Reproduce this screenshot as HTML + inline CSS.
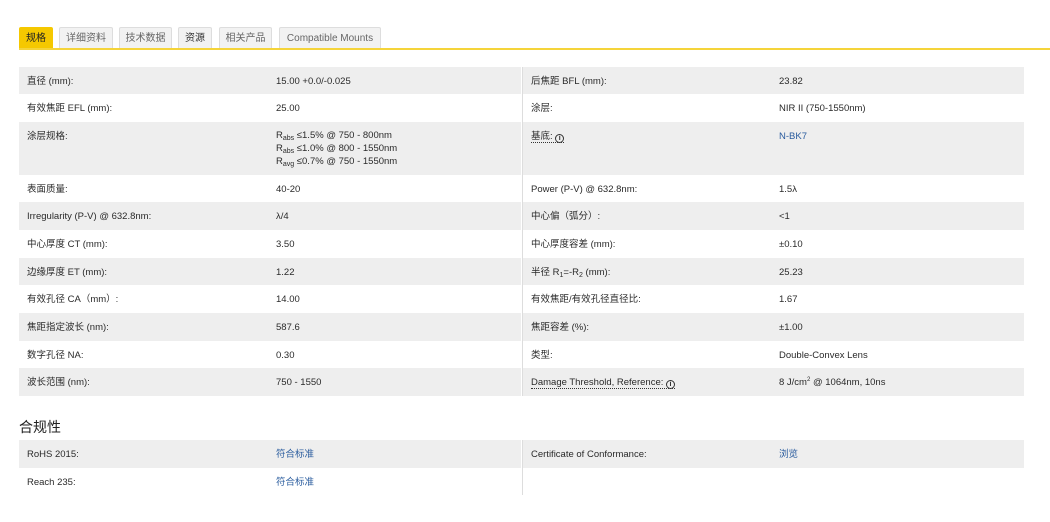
<!DOCTYPE html>
<html><head><meta charset="utf-8"><style>
*{margin:0;padding:0;box-sizing:border-box}
body{width:1050px;height:522px;background:#fff;font-family:"Liberation Sans","Noto Sans CJK SC",sans-serif;font-size:9.5px;color:#2a2a2a;position:relative;overflow:hidden}
.tab{position:absolute;top:27px;height:22px;line-height:22px;text-align:center;background:#f2f2f2;border:1px solid #ddd;border-bottom:none;color:#666;font-size:10px;border-radius:2px 2px 0 0}
.tab.a{background:#f5c800;border-color:#f5c800;color:#222}
.line{position:absolute;left:19px;right:0;top:48px;height:2px;background:#f5d43a}
.r{position:absolute;left:19px;width:1005px}
.r.s .c{background:#eeeeee}
.c{position:absolute;top:0;bottom:0}
.c1{left:0;width:502px}.c2{left:504px;width:501px}
.t{position:absolute;top:8px;white-space:nowrap;line-height:13px}
.l1{left:8px}.v1{left:257px}.l2{left:8px}.v2{left:256px}
a{color:#2a5c9e;text-decoration:none}
.sep{position:absolute;left:522px;width:1px;background:#ddd}
sub{font-size:7px;vertical-align:-2px;line-height:0}
sup{line-height:0}
.u{border-bottom:1px dotted #333}
.i{display:inline-block;width:9px;height:9px;border:1.3px solid #333;border-radius:50%;font-size:7px;line-height:7px;text-align:center;font-weight:bold;vertical-align:-1px}
h2{position:absolute;left:19px;top:417px;font-size:14px;font-weight:normal;color:#222}
</style></head><body>
<div class="tab a" style="left:19px;width:34px">规格</div>
<div class="tab" style="left:59px;width:54px">详细资料</div>
<div class="tab" style="left:119px;width:53px">技术数据</div>
<div class="tab" style="left:178px;width:34px;color:#333">资源</div>
<div class="tab" style="left:219px;width:53px">相关产品</div>
<div class="tab" style="left:279px;width:102px">Compatible Mounts</div>
<div class="line"></div>

<div class="r s" style="top:67px;height:27px"><div class="c c1"><span class="t l1">直径 (mm):</span><span class="t v1">15.00 +0.0/-0.025</span></div><div class="c c2"><span class="t l2">后焦距 BFL (mm):</span><span class="t v2">23.82</span></div></div>
<div class="r" style="top:94px;height:28px"><div class="c c1"><span class="t l1">有效焦距 EFL (mm):</span><span class="t v1">25.00</span></div><div class="c c2"><span class="t l2">涂层:</span><span class="t v2">NIR II (750-1550nm)</span></div></div>
<div class="r s" style="top:122px;height:53px"><div class="c c1"><span class="t l1">涂层规格:</span><span class="t v1" style="top:7px;line-height:13px">R<sub>abs</sub> ≤1.5% @ 750 - 800nm<br>R<sub>abs</sub> ≤1.0% @ 800 - 1550nm<br>R<sub>avg</sub> ≤0.7% @ 750 - 1550nm</span></div><div class="c c2"><span class="t l2"><span class="u">基底: <span class="i">i</span></span></span><span class="t v2"><a>N-BK7</a></span></div></div>
<div class="r" style="top:175px;height:27px"><div class="c c1"><span class="t l1">表面质量:</span><span class="t v1">40-20</span></div><div class="c c2"><span class="t l2">Power (P-V) @ 632.8nm:</span><span class="t v2">1.5λ</span></div></div>
<div class="r s" style="top:202px;height:28px"><div class="c c1"><span class="t l1">Irregularity (P-V) @ 632.8nm:</span><span class="t v1">λ/4</span></div><div class="c c2"><span class="t l2">中心偏（弧分）:</span><span class="t v2">&lt;1</span></div></div>
<div class="r" style="top:230px;height:28px"><div class="c c1"><span class="t l1">中心厚度 CT (mm):</span><span class="t v1">3.50</span></div><div class="c c2"><span class="t l2">中心厚度容差 (mm):</span><span class="t v2">±0.10</span></div></div>
<div class="r s" style="top:258px;height:27px"><div class="c c1"><span class="t l1">边缘厚度 ET (mm):</span><span class="t v1">1.22</span></div><div class="c c2"><span class="t l2">半径 R<sub>1</sub>=-R<sub>2</sub> (mm):</span><span class="t v2">25.23</span></div></div>
<div class="r" style="top:285px;height:28px"><div class="c c1"><span class="t l1">有效孔径 CA（mm）:</span><span class="t v1">14.00</span></div><div class="c c2"><span class="t l2">有效焦距/有效孔径直径比:</span><span class="t v2">1.67</span></div></div>
<div class="r s" style="top:313px;height:28px"><div class="c c1"><span class="t l1">焦距指定波长 (nm):</span><span class="t v1">587.6</span></div><div class="c c2"><span class="t l2">焦距容差 (%):</span><span class="t v2">±1.00</span></div></div>
<div class="r" style="top:341px;height:27px"><div class="c c1"><span class="t l1">数字孔径 NA:</span><span class="t v1">0.30</span></div><div class="c c2"><span class="t l2">类型:</span><span class="t v2">Double-Convex Lens</span></div></div>
<div class="r s" style="top:368px;height:28px"><div class="c c1"><span class="t l1">波长范围 (nm):</span><span class="t v1">750 - 1550</span></div><div class="c c2"><span class="t l2"><span class="u">Damage Threshold, Reference: <span class="i">i</span></span></span><span class="t v2">8 J/cm<sup style="font-size:6px">2</sup> @ 1064nm, 10ns</span></div></div>
<div class="sep" style="top:67px;height:329px"></div>

<h2>合规性</h2>
<div class="r s" style="top:440px;height:28px"><div class="c c1"><span class="t l1">RoHS 2015:</span><span class="t v1"><a>符合标准</a></span></div><div class="c c2"><span class="t l2">Certificate of Conformance:</span><span class="t v2"><a>浏览</a></span></div></div>
<div class="r" style="top:468px;height:27px"><div class="c c1"><span class="t l1">Reach 235:</span><span class="t v1"><a>符合标准</a></span></div></div>
<div class="sep" style="top:440px;height:55px"></div>
</body></html>
